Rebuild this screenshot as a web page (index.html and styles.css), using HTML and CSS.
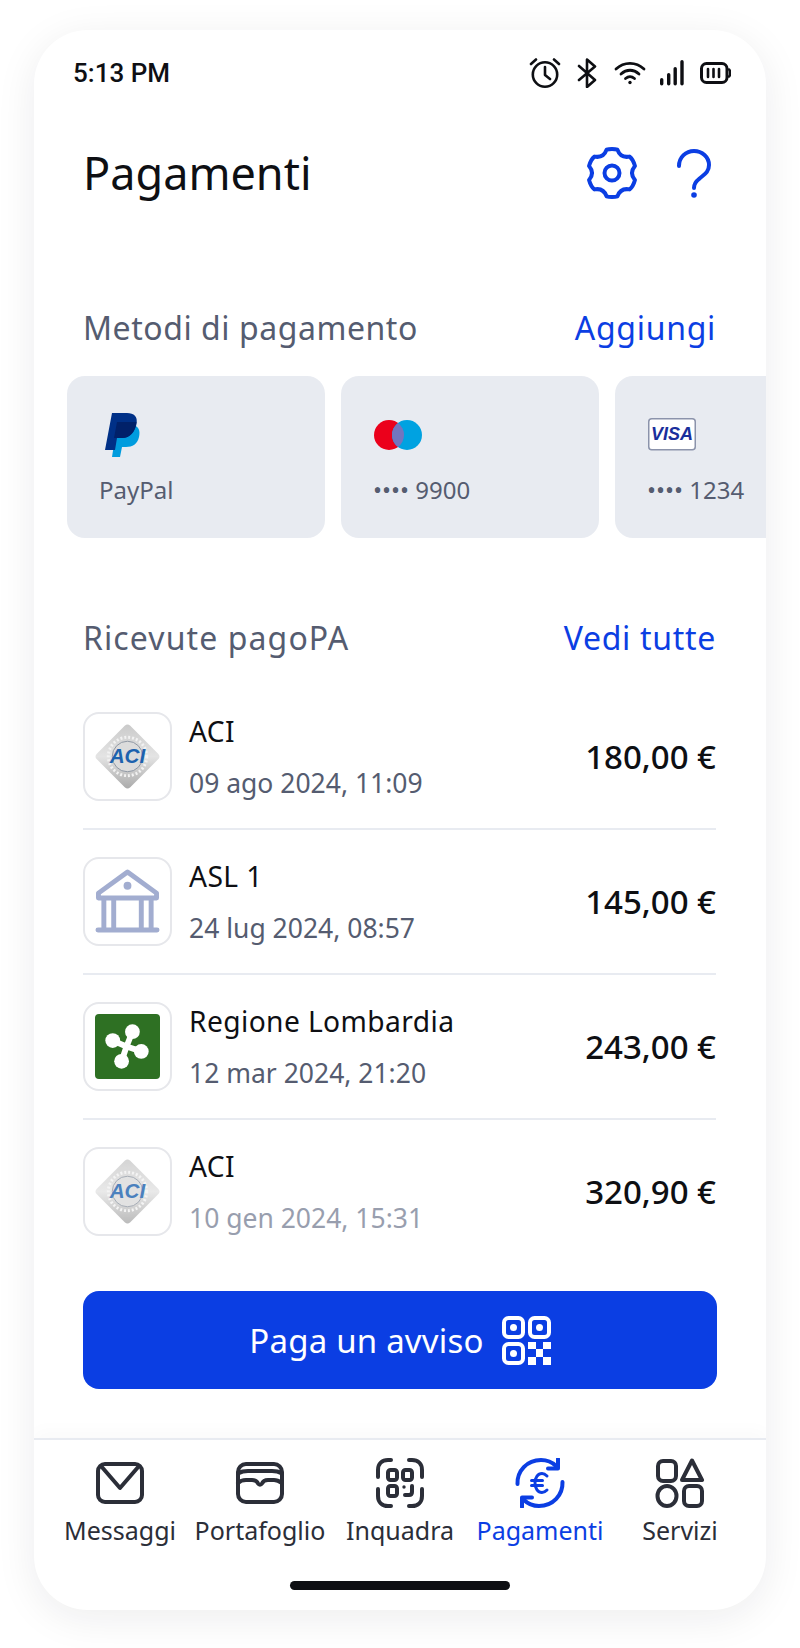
FILE: index.html
```html
<!DOCTYPE html>
<html lang="it">
<head>
<meta charset="utf-8">
<title>Pagamenti</title>
<link rel="stylesheet" href="styles.css">
</head>
<body>
<main class="phone">
  <div class="status">
    <span class="time">5:13 PM</span>
    <div class="status-icons">
      <svg class="i-alarm" viewBox="0 0 32 30" fill="none" stroke="#0e0f13" stroke-width="2.6" stroke-linecap="round" stroke-linejoin="round"><circle cx="16" cy="16.5" r="12.2"/><path d="M16 9v8l5 4M2 6l5-4.500M30 6l-5-4.500"/></svg>
      <svg class="i-bt" viewBox="0 0 20 30" fill="none" stroke="#0e0f13" stroke-width="2.6" stroke-linecap="round" stroke-linejoin="round"><path d="M2 8l16 14-8 7V1.500l8 7L2 22"/></svg>
      <svg class="i-wifi" viewBox="0 0 32 24" fill="none" stroke="#0e0f13" stroke-width="2.800" stroke-linecap="round"><path d="M2 8c8-7.500 20-7.500 28 0M7 13c5.500-5 12.500-5 18 0M11.500 17.500c3-2.500 6-2.500 9 0"/><circle cx="16" cy="21.500" r="1.700" fill="#0e0f13" stroke="none"/></svg>
      <svg class="i-signal" viewBox="0 0 24 26" fill="#0e0f13"><rect x="0" y="18" width="3.400" height="7.500" rx="1.700"/><rect x="7" y="13" width="3.400" height="12.500" rx="1.700"/><rect x="13.500" y="7" width="3.400" height="18.500" rx="1.700"/><rect x="20.300" y="0" width="3.400" height="25.500" rx="1.700"/></svg>
      <svg class="i-batt" viewBox="0 0 31 22" fill="none"><rect x="1.500" y="1.500" width="25.500" height="19" rx="5" stroke="#0e0f13" stroke-width="3"/><path d="M29 7.500c1.500.5 1.500 6.500 0 7" stroke="#0e0f13" stroke-width="2.400" stroke-linecap="round"/><path d="M8 7v8M13.500 7v8M19 7v8" stroke="#0e0f13" stroke-width="2.600" stroke-linecap="round"/></svg>
    </div>
  </div>

  <header class="top">
    <h1 class="title">Pagamenti</h1>
    <div class="top-actions">
      <svg class="i-gear" viewBox="-2 -1 52 52" fill="none" stroke="#0b3ee3" stroke-width="4" stroke-linejoin="round"><path d="M18.600 1.600C21 0.800 27 0.800 29.400 1.600Q32.500 10.300 41.550 8.600C44 10.500 46 14.500 46.950 18Q41 25 46.950 32C46 35.500 44 39.500 41.550 41.400Q32.500 39.700 29.400 48.400C27 49.200 21 49.200 18.600 48.400Q15.500 39.700 6.450 41.400C4 39.500 2 35.500 1.050 32Q7 25 1.050 18C2 14.500 4 10.500 6.450 8.600Q15.500 10.300 18.600 1.600Z"/><circle cx="24" cy="25" r="7.500"/></svg>
      <svg class="i-help" viewBox="0 0 34 49" fill="none" stroke="#0b3ee3" stroke-width="4" stroke-linecap="round"><path d="M2 17C2 8 9 2 17 2C25 2 32 8 32 16C32 24 26 26 22 30C18 33 17 35 17 39"/><circle cx="17" cy="46" r="2.800" fill="#0b3ee3" stroke="none"/></svg>
    </div>
  </header>

  <div class="sec-head sec-methods">
    <span class="sec-title">Metodi di pagamento</span>
    <a class="sec-link">Aggiungi</a>
  </div>

  <div class="cards">
    <div class="card">
      <svg class="card-logo" viewBox="0 0 48 44"><g transform="translate(3 0)"><path fill="#009cde" d="M14 12h14c8 0 9.500 6 8 12-1.500 7-6.500 10-13 10h-4l-2 10h-8z"/><path fill="#003087" d="M9 0h15c7 0 11 3.500 9.500 11C32 19 27 25 19 25h-5l-2 12H2z"/><path fill="#012169" d="M14 9h19.500C32 19 27 25 19 25h-8z"/></g></svg>
      <span class="card-label">PayPal</span>
    </div>
    <div class="card">
      <svg class="card-logo" viewBox="0 0 48 44"><circle cx="15" cy="22" r="15" fill="#eb001b"/><circle cx="33" cy="22" r="15" fill="#00a2e1"/><path fill="#7375bf" d="M24 10a15 15 0 0 1 0 24 15 15 0 0 1 0-24z"/></svg>
      <span class="card-label">•••• 9900</span>
    </div>
    <div class="card">
      <svg class="card-logo" viewBox="0 0 48 44"><rect x=".75" y="5.750" width="46.500" height="31" rx="3" fill="#fff" stroke="#8b93ab" stroke-width="1.500"/><text class="visa-text" x="24" y="27" text-anchor="middle">VISA</text></svg>
      <span class="card-label">•••• 1234</span>
    </div>
  </div>

  <div class="sec-head sec-receipts">
    <span class="sec-title">Ricevute pagoPA</span>
    <a class="sec-link">Vedi tutte</a>
  </div>

  <ul class="list">
    <li class="row">
      <div class="org">
        <svg viewBox="0 0 66 66"><defs><linearGradient id="g1" x1="0" y1="0" x2="1" y2="1"><stop offset="0" stop-color="#c9c9c9"/><stop offset=".5" stop-color="#e4e4e4"/><stop offset="1" stop-color="#a8a8a8"/></linearGradient></defs><rect x="9" y="9" width="48" height="48" rx="4" transform="rotate(45 33 33)" fill="url(#g1)"/><circle cx="33" cy="33" r="19.500" fill="none" stroke="#f2f2f2" stroke-width="3" stroke-dasharray="2 2"/><circle cx="33" cy="33" r="15.500" fill="#dcdcdc" stroke="#8f97a3" stroke-width="1"/><text class="aci-text" x="33" y="40" text-anchor="middle">ACI</text></svg>
      </div>
      <div class="info"><span class="name">ACI</span><span class="date">09 ago 2024, 11:09</span></div>
      <span class="amount">180,00 €</span>
    </li>
    <li class="row">
      <div class="org">
        <svg viewBox="0 0 66 66" fill="none" stroke="#a2add0" stroke-width="5" stroke-linejoin="round" stroke-linecap="round"><path d="M3.500 29.500v-5L33 3l29.500 21.500v5z"/><circle cx="33" cy="17" r="4" fill="#a2add0" stroke="none"/><path d="M9 30v30M19 30v30M47 30v30M57 30v30M3 62h60"/></svg>
      </div>
      <div class="info"><span class="name">ASL 1</span><span class="date">24 lug 2024, 08:57</span></div>
      <span class="amount">145,00 €</span>
    </li>
    <li class="row">
      <div class="org">
        <svg viewBox="0 0 66 66"><rect width="66" height="66" rx="4" fill="#2e7023"/><g stroke="#fff" stroke-width="6" stroke-linecap="round"><path d="M38 18L32 33M18 27L32 33M47 38L32 33M27 48L32 33"/></g><g fill="#fff"><circle cx="38" cy="18" r="7.500"/><circle cx="18" cy="27" r="7.500"/><circle cx="47" cy="38" r="7.500"/><circle cx="27" cy="48" r="7.500"/></g></svg>
      </div>
      <div class="info"><span class="name">Regione Lombardia</span><span class="date">12 mar 2024, 21:20</span></div>
      <span class="amount">243,00 €</span>
    </li>
    <li class="row row-last">
      <div class="org org-faded">
        <svg viewBox="0 0 66 66"><defs><linearGradient id="g2" x1="0" y1="0" x2="1" y2="1"><stop offset="0" stop-color="#c9c9c9"/><stop offset=".5" stop-color="#e4e4e4"/><stop offset="1" stop-color="#a8a8a8"/></linearGradient></defs><rect x="9" y="9" width="48" height="48" rx="4" transform="rotate(45 33 33)" fill="url(#g2)"/><circle cx="33" cy="33" r="19.500" fill="none" stroke="#f2f2f2" stroke-width="3" stroke-dasharray="2 2"/><circle cx="33" cy="33" r="15.500" fill="#dcdcdc" stroke="#8f97a3" stroke-width="1"/><text class="aci-text" x="33" y="40" text-anchor="middle">ACI</text></svg>
      </div>
      <div class="info"><span class="name">ACI</span><span class="date date-faded">10 gen 2024, 15:31</span></div>
      <span class="amount">320,90 €</span>
    </li>
  </ul>

  <button class="pay">
    <span>Paga un avviso</span>
    <svg class="i-qr" viewBox="0 0 49 49" fill="none"><g stroke="#fff" stroke-width="4"><rect x="2" y="2" width="19" height="19" rx="4.500"/><rect x="28" y="2" width="19" height="19" rx="4.500"/><rect x="2" y="28" width="19" height="19" rx="4.500"/></g><g fill="#fff"><circle cx="11.500" cy="11.500" r="3.500"/><circle cx="37.500" cy="11.500" r="3.500"/><circle cx="11.500" cy="37.500" r="3.500"/><path d="M26 26h8v7h-8zM41 26h8v7h-8zM34 33h7v8h-7zM26 41h8v8h-8zM41 41h8v8h-8z"/></g></svg>
  </button>

  <nav class="nav">
    <div class="tab">
      <svg viewBox="0 0 48 50" fill="none" stroke="#2b2e38" stroke-width="4" stroke-linejoin="round" stroke-linecap="round"><rect x="2" y="6" width="44" height="38" rx="7"/><path d="M5 8l19 22L43 8"/></svg>
      <span>Messaggi</span>
    </div>
    <div class="tab">
      <svg viewBox="0 0 48 50" fill="none" stroke="#2b2e38" stroke-width="4" stroke-linejoin="round" stroke-linecap="round"><rect x="2" y="6" width="44" height="38" rx="8"/><path d="M3 15c3-2 6-2 9-2h24c3 0 6 0 9 2M2 25c2-2 5-3 8-3h6c3 0 5 1 6 3.500 1 1.500 3 1.500 4 0 1-2.500 3-3.500 6-3.500h6c3 0 5 1 8 3"/></svg>
      <span>Portafoglio</span>
    </div>
    <div class="tab">
      <svg viewBox="0 0 48 50" fill="none" stroke="#2b2e38" stroke-width="4" stroke-linejoin="round" stroke-linecap="round"><path d="M2 19v-7C2 6 6 2 12 2h3M33 2h3c6 0 10 4 10 10v7M46 31v7c0 6-4 10-10 10h-3M15 48h-3C6 48 2 44 2 38v-7"/><rect x="12" y="12" width="9" height="10" rx="2.500"/><rect x="27" y="12" width="9" height="10" rx="2.500"/><rect x="12" y="28" width="9" height="10" rx="2.500"/><path d="M36 28v6c0 2-1 3-3 3h-4"/><circle cx="28" cy="29" r="1.700" fill="#2b2e38" stroke="none"/></svg>
      <span>Inquadra</span>
    </div>
    <div class="tab tab-on">
      <svg viewBox="0 0 50 50" fill="none" stroke="#0b3ee3" stroke-width="4" stroke-linejoin="round" stroke-linecap="round"><path d="M2.500 26C2 13 12 2 26 2c6 0 11 2 15 6"/><path d="M43 1v9.500H33"/><path d="M47.500 24C48 37 38 48 24 48c-6 0-11-2-15-6"/><path d="M7 49v-9.500H17"/><path d="M32 18c-1.500-1.500-3-2.500-5-2.500-4 0-7 4-7 9.500s3 9.500 7 9.500c2 0 3.500-1 5-2.500M16.500 22.500h11M16.500 27.500h11" stroke-width="3"/></svg>
      <span>Pagamenti</span>
    </div>
    <div class="tab">
      <svg viewBox="0 0 48 50" fill="none" stroke="#2b2e38" stroke-width="4" stroke-linejoin="round"><rect x="2" y="3" width="18" height="20" rx="5"/><path d="M36 2.500L46 22H26z"/><ellipse cx="11" cy="38" rx="9.500" ry="10"/><rect x="28" y="28" width="18" height="20" rx="5"/></svg>
      <span>Servizi</span>
    </div>
  </nav>
  <div class="home"></div>
</main>
</body>
</html>
```
FILE: styles.css
```css
* { box-sizing: border-box; margin: 0; padding: 0; }
html, body { background: #fff; }
body { width: 800px; height: 1648px; overflow: hidden; font-family: "Noto Sans", sans-serif; color: #0e0f13; }

.phone {
  width: 732px;
  height: 1580px;
  margin: 30px 34px 38px;
  background: #fff;
  border-radius: 54px;
  overflow: hidden;
  box-shadow: 0 8px 40px rgba(30, 30, 40, .08);
}

.status { height: 84px; padding: 28px 35px 0 39px; display: flex; justify-content: space-between; align-items: flex-start; }
.time { font-family: Roboto, sans-serif; font-weight: 500; font-size: 26px; line-height: 30px; }
.status-icons { display: flex; align-items: center; gap: 16px; height: 30px; }
.i-alarm { width: 32px; height: 30px; }
.i-bt { width: 20px; height: 30px; margin-right: 1px; }
.i-wifi { width: 32px; height: 24px; }
.i-signal { width: 24px; height: 26px; margin-left: -2px; }
.i-batt { width: 31px; height: 22px; }

.top { height: 118px; padding: 0 55px 0 49px; display: flex; align-items: center; justify-content: space-between; }
.title { font-size: 45px; font-weight: 400; line-height: 60px; }
.top-actions { display: flex; align-items: center; gap: 39px; }
.i-gear { width: 52px; height: 52px; }
.i-help { width: 34px; height: 49px; }

.sec-head { height: 48px; padding: 0 50px 0 49px; display: flex; align-items: center; justify-content: space-between; font-size: 32px; letter-spacing: .55px; }
.sec-methods { margin-top: 71px; }
.sec-receipts { margin-top: 75px; letter-spacing: 1.1px; }
.sec-title { color: #555c70; }
.sec-link { color: #0b3ee3; font-weight: 450; letter-spacing: .7px; }

.cards { margin-top: 25px; padding-left: 33px; display: flex; gap: 16px; overflow: hidden; }
.card { flex: 0 0 258px; height: 162px; padding: 37px 33px 0; background: #e8ebf1; border-radius: 18px; }
.card-logo { display: block; width: 48px; height: 44px; }
.card-label { display: block; margin: 17px 0 0 -1px; font-size: 24px; line-height: 32px; color: #555c70; white-space: nowrap; }
.visa-text { font-family: "Liberation Sans", sans-serif; font-weight: 700; font-style: italic; font-size: 18px; fill: #1a2f9c; }

.list { list-style: none; margin: 24px 50px 0 49px; }
.row { display: flex; align-items: center; padding: 27px 0 27px; border-bottom: 2px solid #e8ebf1; }
.row-last { border-bottom: 0; padding-bottom: 28px; }
.org { flex: 0 0 89px; height: 89px; padding: 10px; border: 2px solid #e6e7eb; border-radius: 16px; }
.org svg { display: block; width: 65px; height: 65px; }
.org-faded svg { opacity: .8; }
.info { flex: 1; height: 89px; padding-top: 1px; margin-left: 17px; display: flex; flex-direction: column; gap: 16px; }
.name { font-size: 28.2px; line-height: 36px; font-weight: 450; letter-spacing: .4px; }
.date { font-size: 26.5px; line-height: 36px; color: #555c70; }
.date-faded { color: #989eae; }
.amount { font-size: 33px; font-weight: 500; }
.aci-text { font-family: "Liberation Sans", sans-serif; font-weight: 700; font-style: italic; font-size: 21px; fill: #1d62ae; }

.pay { display: flex; align-items: center; justify-content: center; gap: 18px; width: 634px; height: 98px; margin: 27px 49px 0; background: #0b3ee3; color: #fff; border: 0; border-radius: 16px; font: 450 33px "Noto Sans", sans-serif; letter-spacing: .2px; }
.i-qr { width: 49px; height: 49px; }

.nav { margin-top: 49px; padding: 18px 16px 0; border-top: 2px solid #e8ebf1; display: grid; grid-template-columns: repeat(5, 140px); box-shadow: 0 -8px 16px rgba(0, 0, 0, .02); }
.tab { display: flex; flex-direction: column; align-items: center; gap: 7px; color: #2b2e38; font-size: 25px; line-height: 30px; white-space: nowrap; }
.tab svg { width: 50px; height: 50px; }
.tab-on { color: #0b3ee3; }

.home { width: 220px; height: 9px; margin: 36px auto 0; border-radius: 5px; background: #0e0f13; }
```
